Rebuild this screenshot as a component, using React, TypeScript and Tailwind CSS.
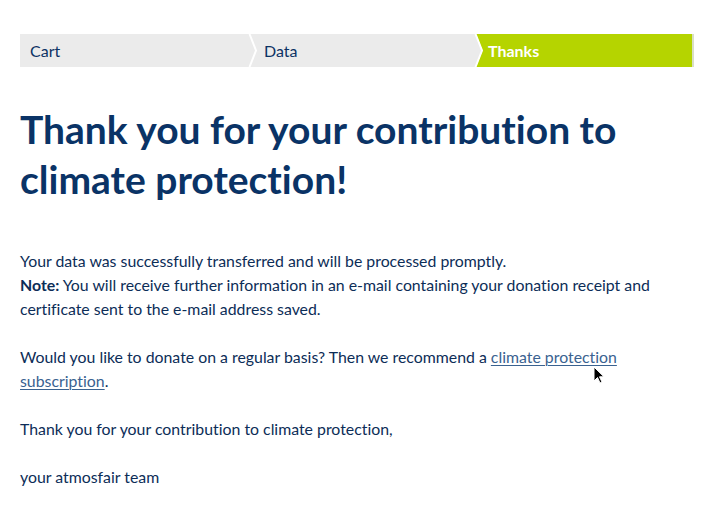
import React from "react";

function Chevron({ green }: { green?: boolean }) {
  return (
    <svg
      width="12"
      height="33"
      viewBox="0 0 12 33"
      className="absolute left-0 top-0"
      aria-hidden
    >
      {green && <polygon points="0,0 12,0 12,33 0,33" fill="#b5d400" />}
      <polygon points="0,0 2,0 8.5,16.5 2,33 0,33" fill="#ebebeb" />
      <polyline
        points="1.5,0 8,16.5 1.5,33"
        fill="none"
        stroke="#ffffff"
        strokeWidth="2"
      />
    </svg>
  );
}

export default function App() {
  return (
    <div
      className="relative w-[718px] h-[510px] bg-white overflow-hidden [font-variant-ligatures:none]"
      style={{ fontFamily: "Lato, 'Open Sans', sans-serif" }}
    >
      <div className="pt-[34px] pl-[20px] pr-[24px]">
        <div className="flex h-[33px] bg-[#ebebeb] text-[16px] text-[#0c3264]">
          <div className="flex w-[228px] items-center pl-[10px]">Cart</div>
          <div className="relative flex w-[226px] items-center pl-[16px]">
            <Chevron />
            Data
          </div>
          <div className="relative flex flex-1 items-center bg-[#b5d400] pl-[14px] font-bold text-white border-r-2 border-[#d9dfc4]">
            <Chevron green />
            <span className="relative">Thanks</span>
          </div>
        </div>
      </div>

      <h1 className="mt-[37px] pl-[20px] pr-[40px] text-[39px] font-bold leading-[50px] text-[#0a3366]">
        Thank you for your contribution to climate protection!
      </h1>

      <div className="mt-[45px] pl-[20px] pr-[40px] text-[15.85px] leading-[24px] text-[#0c2d57]">
        <p>Your data was successfully transferred and will be processed promptly.</p>
        <p>
          <strong className="font-bold">Note:</strong> You will receive further information in an e-mail containing your donation receipt and certificate sent to the e-mail address saved.
        </p>
        <p className="mt-[24px]">
          Would you like to donate on a regular basis? Then we recommend a{" "}
          <a className="text-[#3a6290] underline underline-offset-2 decoration-1">climate protection subscription</a>.
        </p>
        <p className="mt-[24px]">Thank you for your contribution to climate protection,</p>
        <p className="mt-[24px]">your atmosfair team</p>
      </div>

      <svg
        className="absolute left-[593px] top-[366px]"
        width="12"
        height="19"
        viewBox="0 0 12 19"
        aria-hidden
      >
        <path
          d="M1 1 L1 15 L4.5 11.5 L7 17 L9 16 L6.5 10.8 L11 10.8 Z"
          fill="#000"
          stroke="#fff"
          strokeWidth="1"
          strokeLinejoin="round"
        />
      </svg>
    </div>
  );
}
